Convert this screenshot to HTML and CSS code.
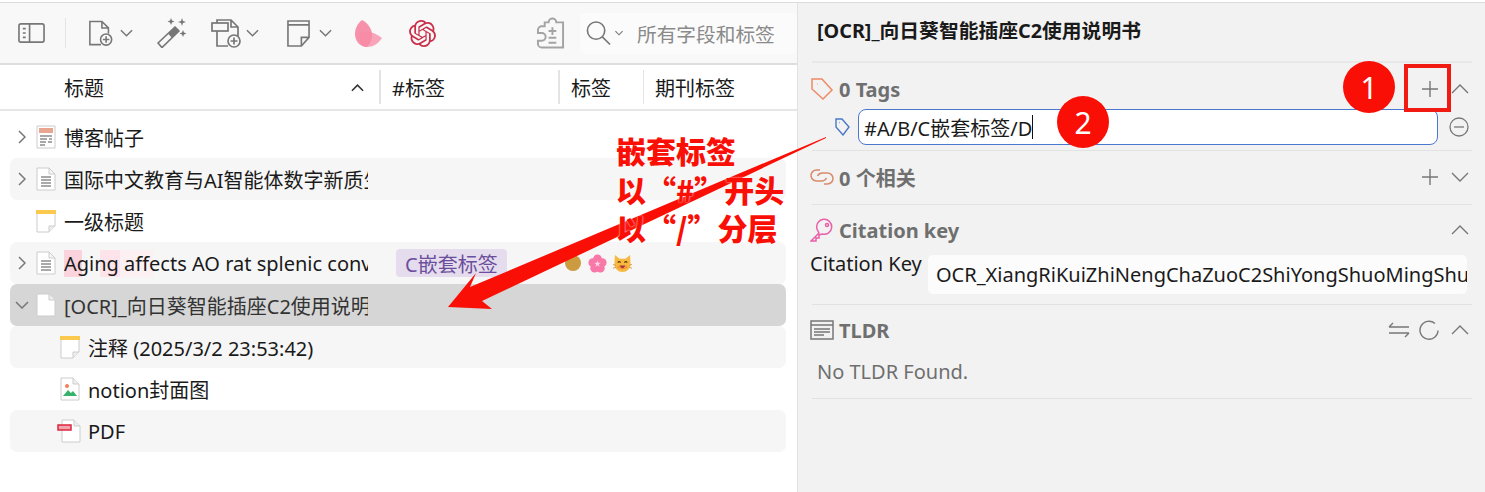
FILE: index.html
```html
<!DOCTYPE html>
<html lang="zh-CN">
<head>
<meta charset="utf-8">
<title>Zotero</title>
<link rel="stylesheet" href="styles.css">
</head>
<body>
<div class="app">
  <main class="left">
    <div class="toolbar">
      <svg class="ti sb" viewBox="0 0 28 22"><rect x="1" y="1.500" width="26" height="19" rx="2"/><path d="M12 1.500v19M5 6.500h3M5 11h3M5 15.500h3"/></svg>
      <span class="tsep"></span>
      <svg class="ti newitem" viewBox="0 0 28 30"><path d="M14 27H2V2h13l7 7v6M15 2v7h7"/><circle cx="19.500" cy="21.500" r="6"/><path d="M19.500 18v7M16 21.500h7"/></svg>
      <svg class="chev c1" viewBox="0 0 14 8"><path d="M1 1l6 6 6-6"/></svg>
      <svg class="ti wand" viewBox="0 0 30 30"><path d="M1 25L18 9l4 4L5 29.500z" stroke-linejoin="round"/><path class="fill" d="M11 15.500L18 9l4 4-7 7z"/><path class="fill" d="M14 0l1 2.500 2.500 1-2.500 1-1 2.500-1-2.500-2.500-1 2.500-1zM25 0l1 3 3 1-3 1-1 3-1-3-3-1 3-1zM26 12l1 2.500 2.500 1-2.500 1-1 2.500-1-2.500-2.500-1 2.500-1z"/></svg>
      <svg class="ti addatt" viewBox="0 0 30 29"><path d="M6 4V1h14l7 7v9M20 1v7h7M6 12v15h11"/><rect x="1" y="4" width="16" height="8"/><circle cx="23" cy="22" r="6"/><path d="M23 18.500v7M19.500 22h7"/></svg>
      <svg class="chev c2" viewBox="0 0 14 8"><path d="M1 1l6 6 6-6"/></svg>
      <svg class="ti note" viewBox="0 0 24 28"><path d="M1 1h22v17l-8 9H1zM1 5h22M23 18h-8v9"/></svg>
      <svg class="chev c3" viewBox="0 0 14 8"><path d="M1 1l6 6 6-6"/></svg>
      <svg class="petal" viewBox="0 0 27 27"><path d="M7 0C2 4 0 9 0 14c0 7 5 13 12 13 4-4 5-8 5-12C17 9 13 3 7 0z" fill="#f77f9e" opacity=".85"/><path d="M5 14c5-4 13-3 22 4-4 6-9 9-15 9C7 27 4 21 5 14z" fill="#f88aa4" opacity=".75"/></svg>
      <svg class="gpt" viewBox="0 0 24 24"><path fill="#c9304a" d="M22.2819 9.8211a5.9847 5.9847 0 0 0-.5157-4.9108 6.0462 6.0462 0 0 0-6.5098-2.9A6.0651 6.0651 0 0 0 4.9807 4.1818a5.9847 5.9847 0 0 0-3.9977 2.9 6.0462 6.0462 0 0 0 .7427 7.0966 5.98 5.98 0 0 0 .511 4.9107 6.051 6.051 0 0 0 6.5146 2.9001A5.9847 5.9847 0 0 0 13.2599 24a6.0557 6.0557 0 0 0 5.7718-4.2058 5.9894 5.9894 0 0 0 3.9977-2.9001 6.0557 6.0557 0 0 0-.7475-7.0729zm-9.022 12.6081a4.4755 4.4755 0 0 1-2.8764-1.0408l.1419-.0804 4.7783-2.7582a.7948.7948 0 0 0 .3927-.6813v-6.7369l2.02 1.1686a.071.071 0 0 1 .038.052v5.5826a4.504 4.504 0 0 1-4.4945 4.4944zm-9.6607-4.1254a4.4708 4.4708 0 0 1-.5346-3.0137l.142.0852 4.783 2.7582a.7712.7712 0 0 0 .7806 0l5.8428-3.3685v2.3324a.0804.0804 0 0 1-.0332.0615L9.74 19.9502a4.4992 4.4992 0 0 1-6.1408-1.6464zM2.3408 7.8956a4.485 4.485 0 0 1 2.3655-1.9728V11.6a.7664.7664 0 0 0 .3879.6765l5.8144 3.3543-2.0201 1.1685a.0757.0757 0 0 1-.071 0l-4.8303-2.7865A4.504 4.504 0 0 1 2.3408 7.872zm16.5963 3.8558L13.1038 8.364 15.1192 7.2a.0757.0757 0 0 1 .071 0l4.8303 2.7913a4.4944 4.4944 0 0 1-.6765 8.1042v-5.6772a.79.79 0 0 0-.407-.667zm2.0107-3.0231l-.142-.0852-4.7735-2.7818a.7759.7759 0 0 0-.7854 0L9.409 9.2297V6.8974a.0662.0662 0 0 1 .0284-.0615l4.8303-2.7866a4.4992 4.4992 0 0 1 6.6802 4.66zM8.3065 12.863l-2.02-1.1638a.0804.0804 0 0 1-.038-.0567V6.0742a4.4992 4.4992 0 0 1 7.3757-3.4537l-.142.0805L8.704 5.459a.7948.7948 0 0 0-.3927.6813zm1.0976-2.3654l2.602-1.4998 2.6069 1.4998v2.9994l-2.5974 1.4997-2.6067-1.4997Z"/></svg>
      <svg class="ti puzzle" viewBox="0 0 30 34"><path d="M9 6h4a4 4 0 1 1 8 0h7v26H6a4 4 0 0 1-4-4v-3h4a4 4 0 0 0 0-8H2v-3a4 4 0 0 1 4-4h3zM17 11v8M13 15h8M13 22h8M13 27h8"/></svg>
      <div class="search">
        <svg class="ti mag" viewBox="0 0 26 26"><circle cx="10.500" cy="10.500" r="9"/><path d="M17 17l8 8"/></svg>
        <svg class="chev c4" viewBox="0 0 14 8"><path d="M2 1.500l5 5 5-5"/></svg>
        <span class="ph">所有字段和标签</span>
      </div>
    </div>
    <div class="thead">
      <div class="th t1"><span>标题</span><svg class="sort" viewBox="0 0 14 8"><path d="M1 7l6-6 6 6"/></svg></div>
      <div class="th t2">#标签</div>
      <div class="th t3">标签</div>
      <div class="th t4">期刊标签</div>
    </div>
    <div class="rows">
      <div class="row">
        <svg class="tw" viewBox="0 0 8 14"><path d="M1 1l6 6-6 6"/></svg>
        <svg class="ric" viewBox="0 0 20 24"><path d="M1 1h18v22H1z" fill="#fff" stroke="#ccc"/><path d="M3 3h14v5H3z" fill="#e8a58f"/><path d="M4 11h12M4 14h7M13 14h3M4 17h6M12 17h4M4 20h5" stroke="#555" stroke-width="1.200"/></svg>
        <span class="name">博客帖子</span>
      </div>
      <div class="row alt">
        <svg class="tw" viewBox="0 0 8 14"><path d="M1 1l6 6-6 6"/></svg>
        <svg class="ric" viewBox="0 0 20 24"><path d="M1 1h12l6 6v16H1zM13 1v6h6" fill="#fff" stroke="#ccc"/><path d="M5 10h10M5 13h10M5 16h10M5 19h10" stroke="#555" stroke-width="1.200"/></svg>
        <span class="name">国际中文教育与AI智能体数字新质生产力</span>
      </div>
      <div class="row">
        <span class="tw-gap"></span>
        <svg class="ric" viewBox="0 0 20 24"><path d="M1 2h18v15l-6 6H1z" fill="#fff" stroke="#ccc"/><path d="M19 17h-6v6" fill="#eee" stroke="#ccc"/><path d="M0 1h20v4H0z" fill="#fbc94e"/></svg>
        <span class="name">一级标题</span>
      </div>
      <div class="row alt">
        <svg class="tw" viewBox="0 0 8 14"><path d="M1 1l6 6-6 6"/></svg>
        <svg class="ric" viewBox="0 0 20 24"><path d="M1 1h12l6 6v16H1zM13 1v6h6" fill="#fff" stroke="#ccc"/><path d="M5 10h10M5 13h10M5 16h10M5 19h10" stroke="#555" stroke-width="1.200"/></svg>
        <span class="name"><span class="hl">Aging affects</span> AO rat splenic conversion</span>
        <span class="tag">C嵌套标签</span>
        <span class="dot"></span>
        <svg class="emo" viewBox="0 0 20 20"><g fill="#f878a8"><circle cx="10" cy="5" r="4.600"/><circle cx="15" cy="9" r="4.600"/><circle cx="13" cy="15" r="4.600"/><circle cx="7" cy="15" r="4.600"/><circle cx="5" cy="9" r="4.600"/></g><path d="M10 7l.9 2.300 2.400.1-1.900 1.500.7 2.400-2.100-1.400-2.100 1.400.7-2.400-1.900-1.500 2.400-.1z" fill="#fdd5e3"/></svg>
        <svg class="emo cat" viewBox="0 0 20 20"><path d="M2 1l5 4h6l5-4 .5 10a8.500 8 0 0 1-17 0z" fill="#f7b93e"/><path d="M4 14a8 6 0 0 0 12 0l-2-2H6z" fill="#f59a3c"/><path d="M5 9q1.500-2 3 0M12 9q1.500-2 3 0" stroke="#5a3a10" stroke-width="1.200"/><path d="M7 12q3 6 6 0z" fill="#a83a3a"/><path d="M0 11l3 1M0 15l3-1M20 11l-3 1M20 15l-3-1" stroke="#c98a2e" stroke-width=".8"/></svg>
      </div>
      <div class="row sel">
        <svg class="tw down" viewBox="0 0 14 8"><path d="M1 1l6 6 6-6"/></svg>
        <svg class="ric" viewBox="0 0 20 24"><path d="M1 1h12l6 6v16H1z" fill="#fff" stroke="#ccc"/><path d="M13 1v6h6" fill="#eee" stroke="#ccc"/></svg>
        <span class="name">[OCR]_向日葵智能插座C2使用说明书</span>
      </div>
      <div class="row alt child">
        <svg class="ric" viewBox="0 0 20 24"><path d="M1 2h18v15l-6 6H1z" fill="#fff" stroke="#ccc"/><path d="M19 17h-6v6" fill="#eee" stroke="#ccc"/><path d="M0 1h20v4H0z" fill="#fbc94e"/></svg>
        <span class="name">注释 (2025/3/2 23:53:42)</span>
      </div>
      <div class="row child">
        <svg class="ric" viewBox="0 0 20 24"><path d="M1 1h12l6 6v16H1z" fill="#fff" stroke="#ccc"/><path d="M13 1v6h6" fill="#eee" stroke="#ccc"/><circle cx="7" cy="9" r="2" fill="#f0805a"/><path d="M3 19l5-6 3 3 2-2 4 5z" fill="#35b36b"/></svg>
        <span class="name">notion封面图</span>
      </div>
      <div class="row alt child">
        <svg class="ric pdf" viewBox="0 0 24 24"><path d="M5 1h12l6 6v16H5z" fill="#fff" stroke="#ccc"/><path d="M17 1v6h6" fill="#eee" stroke="#ccc"/><path d="M1 6h13v5H1z" fill="#f5a3ad" stroke="#d9283f" stroke-width="1.500"/></svg>
        <span class="name">PDF</span>
      </div>
    </div>
  </main>
  <aside class="right">
    <h1 class="title">[OCR]_向日葵智能插座C2使用说明书</h1>
    <section class="sec s-tags">
      <div class="sec-h">
        <svg class="si" viewBox="0 0 24 24" stroke="#ee8a66"><path d="M2 2h10l10 11-9 9L2 12zM7 7h.5"/></svg>
        <span class="sec-t">0 Tags</span>
        <svg class="act plus" viewBox="0 0 18 18"><path d="M9 1v16M1 9h16"/></svg>
        <svg class="act up" viewBox="0 0 18 10"><path d="M1 9l8-8 8 8"/></svg>
      </div>
      <div class="tagrow">
        <svg class="ti2" viewBox="0 0 16 18"><path d="M2 1h6l7 8-6 8-7-8zM5.500 4.500h.5"/></svg>
        <div class="tinput">#A/B/C嵌套标签/D<span class="caret"></span></div>
        <svg class="minus" viewBox="0 0 20 20"><circle cx="10" cy="10" r="9"/><path d="M5 10h10"/></svg>
      </div>
    </section>
    <section class="sec s-rel">
      <div class="sec-h">
        <svg class="si" viewBox="0 0 24 22" stroke="#d98a6a"><path d="M10 4H6.500a5.500 5.500 0 0 0 0 11h5a5.500 5.500 0 0 0 5-3"/><path d="M14 18h3.500a5.500 5.500 0 0 0 0-11h-5a5.500 5.500 0 0 0-5 3"/></svg>
        <span class="sec-t">0 个相关</span>
        <svg class="act plus" viewBox="0 0 18 18"><path d="M9 1v16M1 9h16"/></svg>
        <svg class="act up" viewBox="0 0 18 10"><path d="M1 1l8 8 8-8"/></svg>
      </div>
    </section>
    <section class="sec s-cit">
      <div class="sec-h">
        <svg class="si" viewBox="0 0 24 24" stroke="#e95fa8"><path d="M9 15L1 23h5v-3h3v-3l3-1a7.500 7.500 0 1 0-5-5z"/><circle cx="17" cy="7" r="1.500"/></svg>
        <span class="sec-t">Citation key</span>
        <svg class="act up solo" viewBox="0 0 18 10"><path d="M1 9l8-8 8 8"/></svg>
      </div>
      <div class="citrow">
        <label class="citl">Citation Key</label>
        <div class="citv"><span>OCR_XiangRiKuiZhiNengChaZuoC2ShiYongShuoMingShu</span></div>
      </div>
    </section>
    <section class="sec s-tldr">
      <div class="sec-h">
        <svg class="si tl" viewBox="0 0 24 20" stroke="#777"><rect x="1" y="1" width="22" height="18"/><path d="M1 5h22M4 9h16M4 12h16M4 15h10"/></svg>
        <span class="sec-t">TLDR</span>
        <svg class="act sw" viewBox="0 0 22 16"><path d="M1 5h20M5 1L1 5M1 11h20M21 11l-4 4"/></svg>
        <svg class="act re" viewBox="0 0 20 20"><path d="M16 3.500A9 9 0 1 0 19 10.500"/></svg>
        <svg class="act up" viewBox="0 0 18 10"><path d="M1 9l8-8 8 8"/></svg>
      </div>
      <p class="none">No TLDR Found.</p>
    </section>
  </aside>
</div>
<svg class="arrow" viewBox="0 0 1485 492"><polygon points="826,137 470,287 476,273 448,307 492,309 482,301 826,138"/></svg>
<div class="note-txt">嵌套标签<br>以“#”开头<br>以“/”分层</div>
<span class="badge b1">1</span>
<span class="badge b2">2</span>
<span class="redbox"></span>
</body>
</html>
```
FILE: styles.css
```css
* { box-sizing: border-box; }
html, body { margin: 0; height: 100%; }
body {
  position: relative;
  width: 1485px;
  height: 492px;
  overflow: hidden;
  background: #fff;
  color: #1a1a1a;
  font-family: "Noto Sans", "Noto Sans CJK SC", sans-serif;
  font-size: 20px;
}
svg { display: block; flex: none; fill: none; }
.app { display: flex; height: 492px; padding-top: 2px; }
.left { width: 798px; flex: none; border-right: 1px solid #e2e2e2; border-top: 1px solid #dcdcdc; }
.right { flex: 1; background: #f2f2f2; border-top: 1px solid #dcdcdc; padding: 0 13px 0 14px; }

/* toolbar */
.toolbar { height: 62px; display: flex; align-items: center; background: #f8f8f8; border-bottom: 2px solid #dedede; padding-left: 18px; }
.ti { stroke: #777; stroke-width: 1.700; }
.ti .fill { fill: #777; stroke: none; }
.sb { width: 27px; height: 22px; }
.tsep { width: 1px; height: 30px; background: #e4e4e4; margin: 0 22px 0 20px; }
.newitem { width: 26px; height: 29px; }
.chev { stroke: #777; stroke-width: 1.600; width: 13px; height: 8px; }
.c1 { margin-left: 6px; }
.wand { width: 30px; height: 30px; margin-left: 24px; }
.addatt { width: 30px; height: 29px; margin-left: 24px; }
.c2 { margin-left: 5px; }
.note { width: 23px; height: 27px; margin-left: 28px; }
.c3 { margin-left: 9px; }
.petal { width: 27px; height: 27px; margin-left: 23px; }
.gpt { width: 27px; height: 27px; margin-left: 27px; }
.puzzle { width: 29px; height: 34px; margin-left: 100px; stroke: #a3a3a3; stroke-width: 2; }
.search { width: 218px; height: 41px; margin-left: 15px; background: #fbfbfb; border-radius: 5px; display: flex; align-items: center; padding-left: 6px; }
.mag { width: 25px; height: 26px; }
.c4 { width: 10px; height: 6px; margin-left: 3px; }
.ph { margin-left: 13px; color: #8a8a8a; font-size: 19.700px; white-space: nowrap; }

/* table head */
.thead { height: 46px; display: flex; align-items: center; border-bottom: 2px solid #e6e6e6; }
.th { height: 34px; display: flex; align-items: center; border-right: 2px solid #e4e4e4; padding: 1px 0 0 11px; }
.t1 { width: 381px; padding-left: 64px; justify-content: space-between; padding-right: 15px; }
.t2 { width: 179px; }
.t3 { width: 84px; border-right-width: 1px; }
.t4 { border: 0; }
.sort { width: 13px; height: 8px; stroke: #333; stroke-width: 1.700; }

/* rows */
.rows { padding: 5px 11px 0 10px; }
.row { height: 42px; display: flex; align-items: center; border-radius: 7px; }
.alt { background: #f6f6f6; }
.sel { background: #d6d6d6; }
.tw { width: 8px; height: 14px; margin-left: 8px; stroke: #777; stroke-width: 1.500; }
.tw.down { width: 14px; height: 8px; margin-left: 5px; }
.tw-gap { width: 16px; flex: none; }
.ric { width: 20px; height: 24px; margin-left: 10px; }
.sel .ric { margin-left: 7px; }
.name { width: 304px; flex: none; margin-left: 8px; overflow: hidden; white-space: nowrap; }
.sel .name { color: #333; }
.hl { background: linear-gradient(90deg, #fbd3dc 0 18px, transparent 18px 36px, #fce4ea 36px 56px, #fdf0f3 56px 89px, transparent 89px); }
.child .ric { margin-left: 50px; }
.child .ric.pdf { width: 24px; margin-left: 47px; }
.child .name { margin-left: 8px; }
.child .pdf + .name { margin-left: 7px; }
.tag { margin-left: 28px; height: 28px; padding: 0 9px; background: #e5dced; color: #6b4f9c; border-radius: 4px; display: flex; align-items: center; }
.dot { width: 16px; height: 16px; border-radius: 50%; background: #cc9a3f; margin-left: 58px; }
.emo { width: 19px; height: 19px; margin-left: 7px; }
.cat { width: 21px; margin-left: 5px; }

/* right */
.title { margin: 0; height: 60px; padding: 0 0 6px 5px; display: flex; align-items: center; font-size: 19.800px; font-weight: 700; color: #1a1a1a; white-space: nowrap; border-bottom: 2px solid #e8e8e8; }
.sec { border-bottom: 1px solid #e2e2e2; }
.sec-h { display: flex; align-items: center; height: 54px; padding-right: 3px; }
.si { width: 24px; height: 24px; margin-left: -2px; stroke-width: 1.500; }
.s-rel .si { height: 22px; }
.tl { height: 20px; }
.sec-t { font-size: 20px; font-weight: 700; color: #6f6f6f; margin-left: 5px; }
.act { stroke: #777; stroke-width: 1.400; }
.plus { width: 18px; height: 18px; margin-left: auto; }
.up { width: 18px; height: 10px; margin-left: 12px; }
.solo, .sw { margin-left: auto; }
.sw { width: 22px; height: 16px; }
.re { width: 20px; height: 20px; margin-left: 9px; }
.s-tags { height: 88px; }
.s-tags .sec-h { height: 52px; }
.tagrow { display: flex; align-items: center; margin-top: -6px; }
.ti2 { width: 16px; height: 18px; margin-left: 22px; stroke: #4a78c9; stroke-width: 1.400; }
.tinput { width: 580px; height: 36px; margin-left: 8px; background: #fff; border: 1.500px solid #4a78d0; border-radius: 8px; padding-left: 5px; display: flex; align-items: center; }
.caret { width: 1px; height: 24px; background: #111; }
.minus { width: 20px; height: 20px; margin-left: 11px; stroke: #777; stroke-width: 1.300; }
.s-rel { height: 54px; }
.s-rel .sec-h { height: 52px; }
.s-cit { height: 100px; }
.s-cit .sec-h { height: 50px; }
.citrow { display: flex; }
.citl { margin-left: -2px; width: 118px; line-height: 18px; flex: none; }
.citv { width: 539px; height: 39px; background: #fcfcfc; border-radius: 5px; padding-left: 8px; overflow: hidden; white-space: nowrap; display: flex; align-items: center; }
.s-tldr { height: 94px; }
.s-tldr .sec-h { height: 50px; }
.none { margin: 0 0 0 5px; color: #6f6f6f; line-height: 26px; padding-top: 4px; }

/* annotations */
.arrow { position: absolute; left: 0; top: 0; width: 1485px; height: 492px; }
.arrow polygon { fill: #fa0f06; }
.note-txt { position: absolute; left: 616px; top: 131px; font-size: 30px; line-height: 38.500px; font-weight: 900; color: #fa0f06; font-family: "Noto Sans CJK SC", sans-serif; white-space: nowrap; text-shadow: 0 0 2px #fff; }
.badge { position: absolute; width: 52px; height: 52px; border-radius: 50%; background: #fa0f06; color: #fff; font-size: 30px; display: flex; align-items: center; justify-content: center; font-family: "Noto Sans", sans-serif; }
.b1 { left: 1343px; top: 61px; }
.b2 { left: 1057px; top: 96px; }
.redbox { position: absolute; left: 1404px; top: 64px; width: 47px; height: 48px; border: 4px solid #f21b14; }
```
